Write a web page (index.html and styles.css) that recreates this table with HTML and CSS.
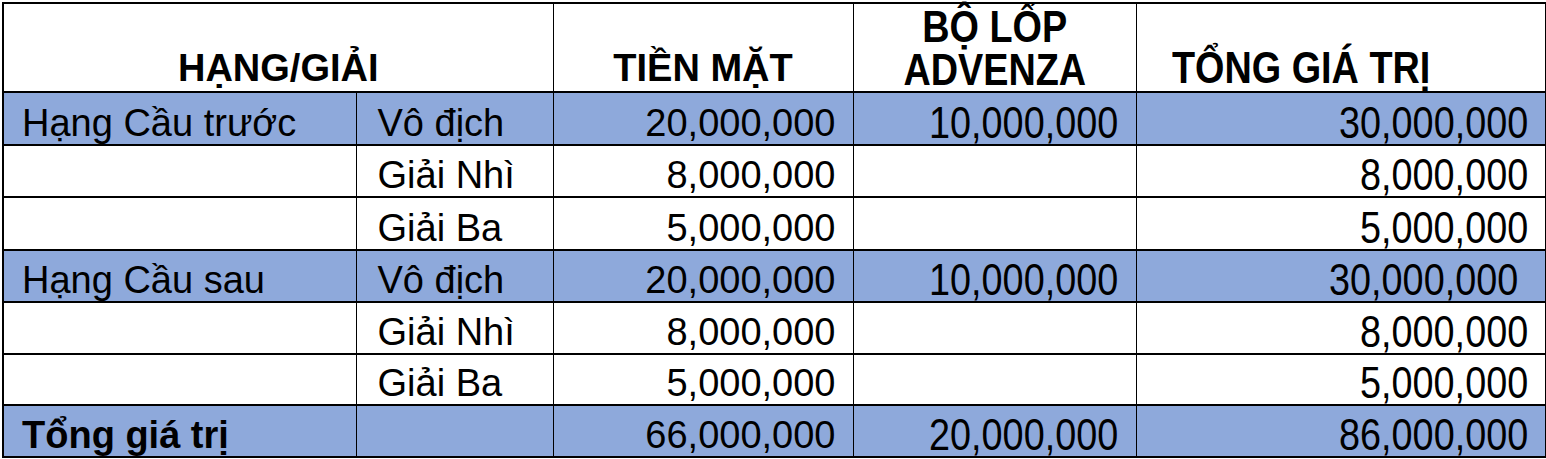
FILE: index.html
```html
<!DOCTYPE html>
<html lang="vi">
<head>
<meta charset="utf-8">
<title>Giải thưởng</title>
<link rel="stylesheet" href="styles.css">
</head>
<body>
<table class="prize">
  <colgroup>
    <col class="c1"><col class="c2"><col class="c3"><col class="c4"><col class="c5">
  </colgroup>
  <thead>
    <tr class="head">
      <th colspan="2" class="h-center">HẠNG/GIẢI</th>
      <th class="h-center">TIỀN MẶT</th>
      <th class="h-center narrow two-line"><span class="nx mid">BỘ LỐP<br>ADVENZA</span></th>
      <th class="h-left narrow"><span class="nx left">TỔNG GIÁ TRỊ</span></th>
    </tr>
  </thead>
  <tbody>
    <tr class="blue tall">
      <td class="name">Hạng Cầu trước</td>
      <td class="prize-name">Vô địch</td>
      <td class="num">20,000,000</td>
      <td class="num narrow"><span class="nx">10,000,000</span></td>
      <td class="num narrow"><span class="nx">30,000,000</span></td>
    </tr>
    <tr>
      <td class="name"></td>
      <td class="prize-name">Giải Nhì</td>
      <td class="num">8,000,000</td>
      <td class="num narrow"></td>
      <td class="num narrow"><span class="nx">8,000,000</span></td>
    </tr>
    <tr class="tall">
      <td class="name"></td>
      <td class="prize-name">Giải Ba</td>
      <td class="num">5,000,000</td>
      <td class="num narrow"></td>
      <td class="num narrow"><span class="nx">5,000,000</span></td>
    </tr>
    <tr class="blue">
      <td class="name">Hạng Cầu sau</td>
      <td class="prize-name">Vô địch</td>
      <td class="num">20,000,000</td>
      <td class="num narrow"><span class="nx">10,000,000</span></td>
      <td class="num narrow trail"><span class="nx">30,000,000</span></td>
    </tr>
    <tr>
      <td class="name"></td>
      <td class="prize-name">Giải Nhì</td>
      <td class="num">8,000,000</td>
      <td class="num narrow"></td>
      <td class="num narrow"><span class="nx">8,000,000</span></td>
    </tr>
    <tr class="short">
      <td class="name"></td>
      <td class="prize-name">Giải Ba</td>
      <td class="num">5,000,000</td>
      <td class="num narrow"></td>
      <td class="num narrow"><span class="nx">5,000,000</span></td>
    </tr>
    <tr class="blue total">
      <td class="name">Tổng giá trị</td>
      <td class="prize-name"></td>
      <td class="num">66,000,000</td>
      <td class="num narrow"><span class="nx">20,000,000</span></td>
      <td class="num narrow"><span class="nx">86,000,000</span></td>
    </tr>
  </tbody>
</table>
</body>
</html>
```

FILE: styles.css
```css
html, body {
  margin: 0;
  padding: 0;
  background: #ffffff;
}

.prize {
  margin: 2px 0 0 2px;
  border-collapse: collapse;
  table-layout: fixed;
  width: 1543px;
  font-family: "Liberation Sans", Arial, sans-serif;
  font-size: 38px;
  color: #000;
  border: 2px solid #000;
}

.c1 { width: 353px; }
.c2 { width: 197px; }
.c3 { width: 300px; }
.c4 { width: 283px; }
.c5 { width: 410px; }

.prize th,
.prize td {
  border-left: 1px solid #000;
  border-right: 1px solid #000;
  border-top: 2px solid #000;
  border-bottom: 2px solid #000;
  padding: 0 17px 0 17px;
  vertical-align: bottom;
  white-space: nowrap;
  line-height: 42px;
}

.head {
  height: 89px;
}

.head th {
  font-weight: bold;
  padding-bottom: 2px;
  border-bottom-width: 1px;
}

.h-center { text-align: center; }
.h-left { text-align: left; padding-left: 35px !important; }

.two-line {
  line-height: 43px !important;
  padding-bottom: 0 !important;
}

.prize tbody tr {
  height: 52px;
}

.prize tbody tr.tall {
  height: 53px;
}

.prize tbody tr.short {
  height: 51px;
}

.blue td {
  background: #8ea9db;
}

.name {
  text-align: left;
  padding-left: 18px !important;
}

.prize-name {
  text-align: left;
  padding-left: 21px !important;
}

.num {
  text-align: right;
}

.trail {
  padding-right: 27px !important;
}

.narrow {
  font-size: 45px;
}

/* Arial Narrow look: horizontally condensed Liberation Sans */
.nx {
  display: inline-block;
  transform: scaleX(0.84);
  transform-origin: right center;
}

.nx.mid {
  transform-origin: center center;
}

.nx.left {
  transform-origin: left center;
}

.total .name {
  font-weight: bold;
}
```
